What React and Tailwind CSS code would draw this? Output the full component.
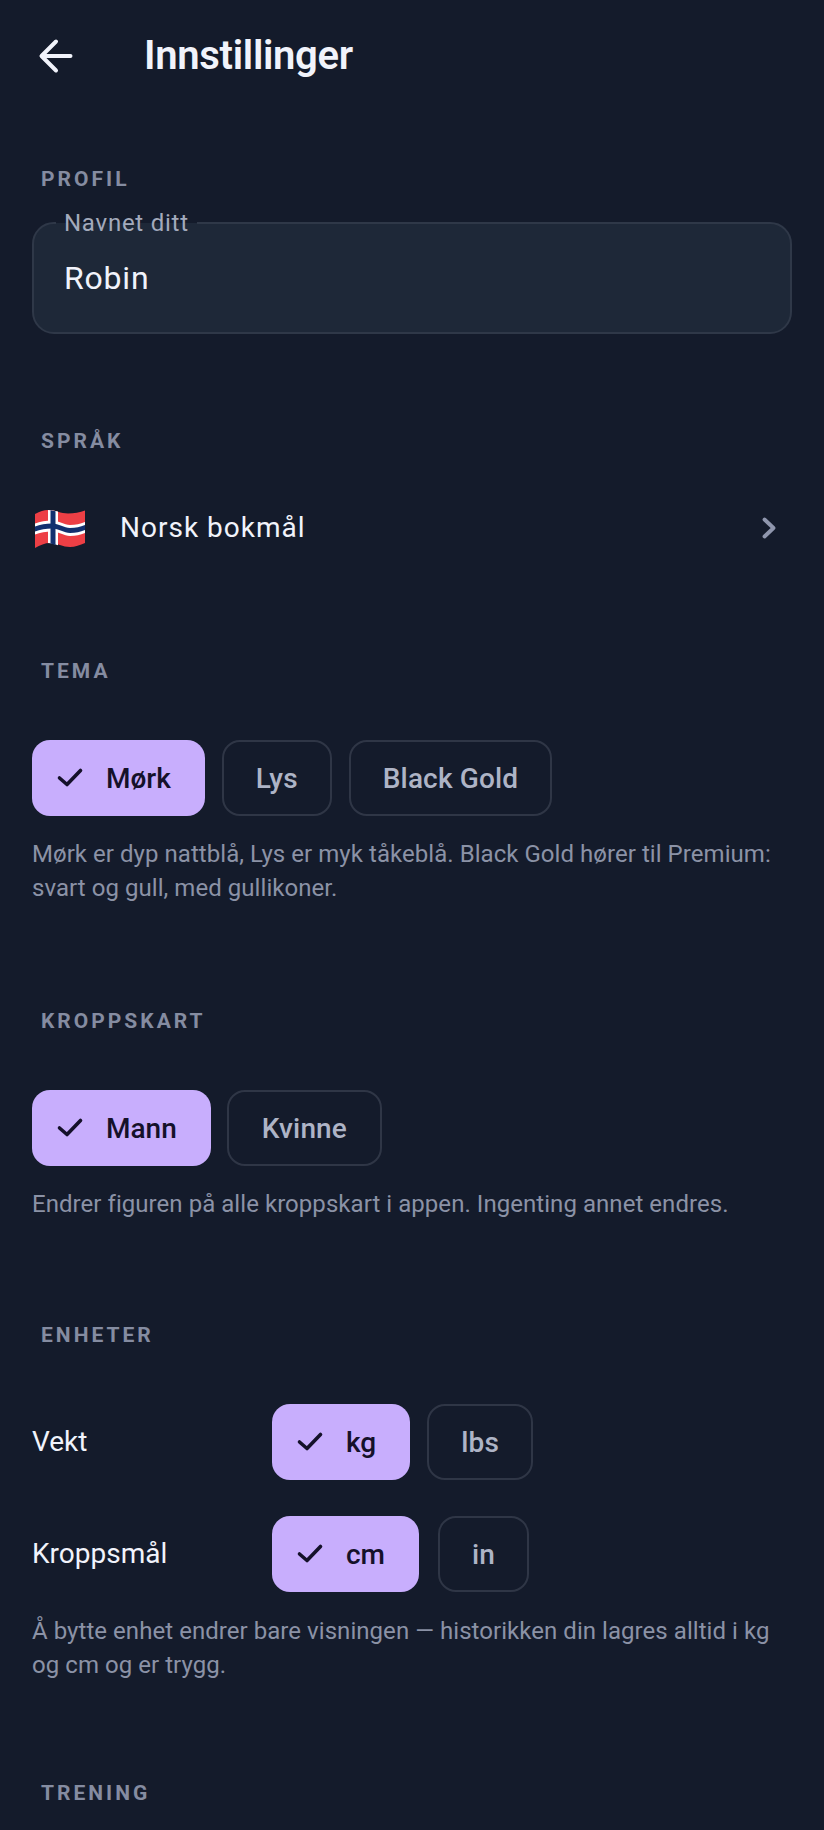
import React from "react";

function Check() {
  return (
    <svg viewBox="0 0 32 32" className="w-8 h-8 shrink-0" fill="none" stroke="currentColor" strokeWidth="3.600" strokeLinecap="round" strokeLinejoin="round">
      <path d="M5.500 16l7.500 6.500L26.500 8.500" />
    </svg>
  );
}

function Chip({ label, selected, pad = "px-[33px]" }) {
  if (selected) {
    return (
      <button className="h-[76px] flex items-center pl-[22px] pr-[34px] gap-[20px] rounded-[18px] bg-[#c8aefd] text-[#15112a] text-[28px] font-medium">
        <Check />
        <span className="pt-px">{label}</span>
      </button>
    );
  }
  return (
    <button className={"h-[76px] pt-px rounded-[18px] border-2 border-[#2f3646] text-[#aeb4c6] text-[28px] font-medium tracking-[0.15px] " + pad}>
      {label}
    </button>
  );
}

function SectionLabel({ children, className }) {
  return (
    <div className={"pl-[41px] h-6 leading-6 text-[21px] font-bold tracking-[3px] text-[#858ca1] " + className}>
      {children}
    </div>
  );
}

function Help({ children, className }) {
  return (
    <p className={"px-8 text-[24px] leading-[34px] tracking-[0.05px] text-[#8b92a6] " + className}>{children}</p>
  );
}

function Flag() {
  return (
    <svg viewBox="0 0 50 38" className="w-[50px] h-[38px] shrink-0 mt-[2px]">
      <path d="M0 4C5 1.500 9 0 13 0c7 0 13 3.500 20 3.500 6 0 12-1 17-3v32.500c-5 2-10 4-15 4-7 0-13-4-20-4-5 0-10 2-15 5z" fill="#ed3f45" />
      <path d="M13 0c3.300 0 6.700.8 10 1.600V35.200c-3.300-1-6.700-2-10-2.200z" fill="#fff" />
      <path d="M0 13.500c5-2 11-3 17-3 7 0 12 4.500 18 4.500 6 0 10-1 15-3v11c-5 2-9 3-15 3-6 0-11-4.500-18-4.500-6 0-12 1-17 3z" fill="#fff" />
      <path d="M15.500.3c1.700.2 3.300.5 5 .9V35c-1.700-.6-3.300-1.100-5-1.500z" fill="#12306f" />
      <path d="M0 16.500c5-2 11-3 17-3 7 0 12 4.500 18 4.500 6 0 10-1 15-3v5c-5 2-9 3-15 3-6 0-11-4.500-18-4.500-6 0-12 1-17 3z" fill="#12306f" />
    </svg>
  );
}

export default function App() {
  return (
    <div className="h-[1830px] overflow-hidden bg-[#141b2b] font-['Roboto',sans-serif] text-[#f1f3fb]">
      <header className="h-[112px] flex items-center pl-8">
        <svg viewBox="0 0 48 48" className="w-12 h-12 shrink-0" fill="none" stroke="currentColor" strokeWidth="4" strokeLinecap="round" strokeLinejoin="round">
          <path d="M38.500 24H10M24 9.500 9.500 24 24 38.500" />
        </svg>
        <h1 className="ml-[64px] text-[40px] font-semibold tracking-[-0.3px]">Innstillinger</h1>
      </header>

      <SectionLabel className="mt-[55px]">PROFIL</SectionLabel>
      <div className="relative mt-[31px] mx-8 h-[112px] rounded-[22px] border-2 border-[#2f3848] bg-[#1e2838] flex items-center px-[30px]">
        <span className="absolute left-[22px] -top-[15px] px-2 bg-[linear-gradient(#141b2b_50%,#1e2838_50%)] text-[24px] leading-[28px] tracking-[0.75px] text-[#a3aabc]">
          Navnet ditt
        </span>
        <span className="text-[32px] tracking-[0.8px]">Robin</span>
      </div>

      <SectionLabel className="mt-[95px]">SPRÅK</SectionLabel>
      <div className="mt-[31px] h-[88px] flex items-center pl-[35px] pr-[47px]">
        <Flag />
        <span className="ml-[35px] flex-1 text-[28px] tracking-[1px]">Norsk bokmål</span>
        <svg viewBox="0 0 16 24" className="w-4 h-6 text-[#8f96ad]" fill="none" stroke="currentColor" strokeWidth="3.800" strokeLinecap="round" strokeLinejoin="round">
          <path d="M3.500 3.500 12.500 12 3.500 20.500" />
        </svg>
      </div>

      <SectionLabel className="mt-[87px]">TEMA</SectionLabel>
      <div className="mt-[57px] px-8 flex gap-[17px]">
        <Chip label="Mørk" selected />
        <Chip label="Lys" pad="px-[32px]" />
        <Chip label="Black Gold" pad="px-[32px]" />
      </div>
      <Help className="mt-[21px]">
        Mørk er dyp nattblå, Lys er myk tåkeblå. Black Gold hører til Premium: svart og gull, med gullikoner.
      </Help>

      <SectionLabel className="mt-[104px]">KROPPSKART</SectionLabel>
      <div className="mt-[57px] px-8 flex gap-4">
        <Chip label="Mann" selected />
        <Chip label="Kvinne" />
      </div>
      <Help className="mt-[21px]">Endrer figuren på alle kroppskart i appen. Ingenting annet endres.</Help>

      <SectionLabel className="mt-[102px]">ENHETER</SectionLabel>
      <div className="mt-[57px] px-8 flex items-center">
        <span className="w-[240px] text-[28px]">Vekt</span>
        <div className="flex gap-[17px]">
          <Chip label="kg" selected />
          <Chip label="lbs" pad="px-[32px]" />
        </div>
      </div>
      <div className="mt-9 px-8 flex items-center">
        <span className="w-[240px] text-[28px]">Kroppsmål</span>
        <div className="flex gap-[19px]">
          <Chip label="cm" selected />
          <Chip label="in" pad="px-[32px]" />
        </div>
      </div>
      <Help className="mt-[22px]">
        Å bytte enhet endrer bare visningen — historikken din lagres alltid i kg og cm og er trygg.
      </Help>

      <SectionLabel className="mt-[99px]">TRENING</SectionLabel>
    </div>
  );
}
